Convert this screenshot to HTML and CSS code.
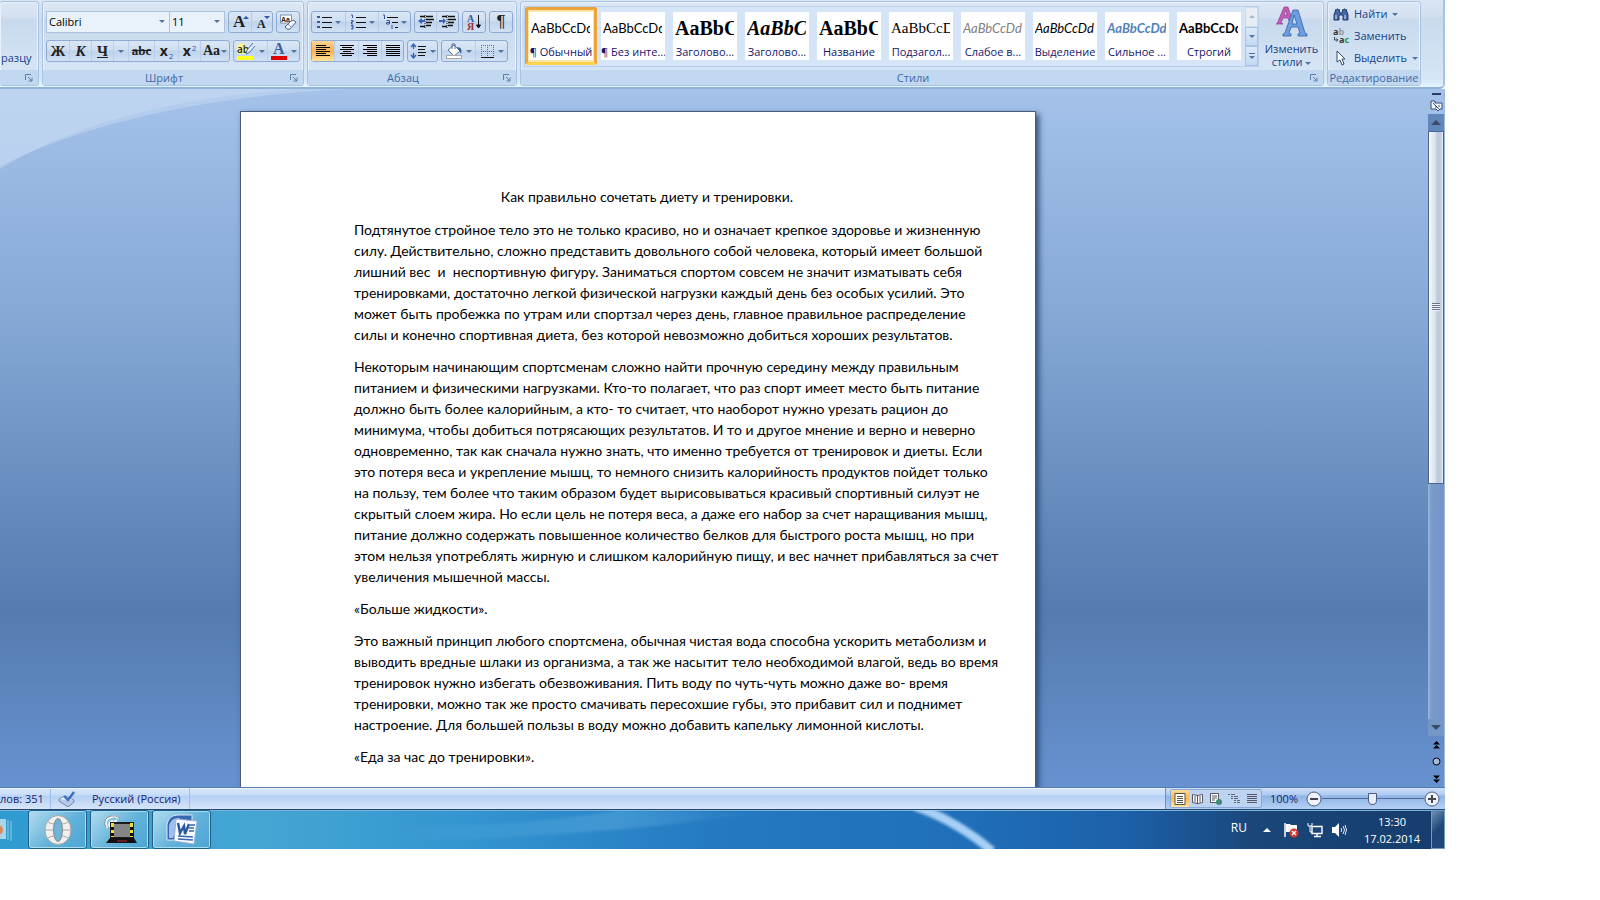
FILE: index.html
```
<!DOCTYPE html>
<html lang="ru">
<head>
<meta charset="utf-8">
<title>Документ</title>
<link rel="stylesheet" href="styles.css">
</head>
<body>
<div class="app">
  <header class="ribbon">
    <section class="group group-clip">
      <div class="group-body"><span class="clip-label">разцу</span></div>
      <div class="group-foot"><span></span><button class="launch" aria-label="Буфер обмена"><svg viewBox="0 0 8 8"><path d="M.5 6V.5H6M3 3l4 4M7 3.500V7H3.500"/></svg></button></div>
    </section>

    <section class="group group-font">
      <div class="group-body rows">
        <div class="row">
          <div class="combos">
            <label class="combo combo-name"><select aria-label="Шрифт"><option>Calibri</option></select></label>
            <label class="combo combo-size"><select aria-label="Размер шрифта"><option>11</option></select></label>
          </div>
          <div class="set">
            <button class="w22 serif big" aria-label="Увеличить размер">A<i class="up"></i></button>
            <button class="w21 serif small" aria-label="Уменьшить размер">A<i class="down"></i></button>
          </div>
          <div class="set">
            <button class="w22" aria-label="Очистить формат"><svg width="18" height="18" viewBox="0 0 18 18"><rect x="1.500" y="2" width="11" height="8" fill="#fff" stroke="#7f93b4"/><text x="2" y="9" font-size="7" font-weight="700" font-family="Liberation Sans" fill="#222">Aa</text><path d="M6 14l6-6q3-2 5 1l-5 6q-3 3-6-1z" fill="#f4f6fb" stroke="#4a5f86"/><path d="M9 11l4 4" stroke="#7f93b4"/></svg></button>
          </div>
        </div>
        <div class="row">
          <div class="set">
            <button class="w22 serif"><b>Ж</b></button>
            <button class="w22 serif"><b><em>К</em></b></button>
            <button class="w22 serif"><b><u>Ч</u></b></button>
            <button class="w16" aria-label="Вид подчеркивания"><i class="tri"></i></button>
            <button class="w25 serif strike"><s>abc</s></button>
            <button class="w24 sub"><b>x</b><sub>2</sub></button>
            <button class="w22 sub"><b>x</b><sup>2</sup></button>
            <button class="w29 serif aa">Aa<i class="tri"></i></button>
          </div>
          <div class="set">
            <button class="w33" aria-label="Цвет выделения"><svg width="20" height="18" viewBox="0 0 20 18"><path d="M1 3q8-4 10 3v6H1z" fill="#f8f48e"/><text x="1" y="11" font-size="10" font-weight="600" font-family="Open Sans" fill="#222">ab</text><path d="M17 1l-6 7-1 4 4-2 5-6" fill="#dce7f7" stroke="#52709f"/><rect x="1" y="14" width="16" height="4" fill="#ff2"/></svg><i class="tri"></i></button>
            <button class="w32" aria-label="Цвет текста"><svg width="18" height="18" viewBox="0 0 18 18"><text x="3" y="12" font-size="16" font-weight="700" font-family="Liberation Serif" fill="#3c5f9f">A</text><rect x="1" y="14" width="16" height="4" fill="#e00000"/></svg><i class="tri"></i></button>
          </div>
        </div>
      </div>
      <div class="group-foot"><span>Шрифт</span><button class="launch" aria-label="Параметры шрифта"><svg viewBox="0 0 8 8"><path d="M.5 6V.5H6M3 3l4 4M7 3.500V7H3.500"/></svg></button></div>
    </section>

    <section class="group group-par">
      <div class="group-body rows">
        <div class="row">
          <div class="set">
            <button class="w33" aria-label="Маркеры"><svg width="16" height="16" viewBox="0 0 16 16"><path d="M1 2h3v2H1zM1 7h3v2H1zM1 12h3v2H1z" fill="#34599c"/><path d="M6 3.500h10M6 8.500h10M6 13.500h10" stroke="#111"/></svg><i class="tri"></i></button>
            <button class="w33" aria-label="Нумерация"><svg width="16" height="16" viewBox="0 0 16 16"><path d="M1 1h1.500v3M1 6.500h2v1.500H1.500V10H3M1 11.500h2V15H1M1.500 13H3" fill="none" stroke="#34599c"/><path d="M6 3.500h10M6 8.500h10M6 13.500h10" stroke="#111"/></svg><i class="tri"></i></button>
            <button class="w32 tight" aria-label="Многоуровневый список"><svg width="18" height="16" viewBox="0 0 18 16"><path d="M1 1h1.500v4M4.500 6.500h3V10h-3V8.500h3M10 11v4" fill="none" stroke="#34599c"/><path d="M5 3.500h11M10 8.500h6M13 13.500h3" stroke="#111"/></svg><i class="tri"></i></button>
          </div>
          <div class="set">
            <button class="w21" aria-label="Уменьшить отступ"><svg width="17" height="16" viewBox="0 0 17 16"><path d="M3 2.500h5M3 12.500h5M9 2.500h7M9 5.500h8M9 8.500h6M9 11.500h5" stroke="#111" stroke-width="1.600"/><path d="M8 1v14" stroke="#111" stroke-dasharray="1 1"/><path d="M1 7l4-3v2h3v2H5v2z" fill="#2f62b8"/></svg></button>
            <button class="w22" aria-label="Увеличить отступ"><svg width="17" height="16" viewBox="0 0 17 16"><path d="M3 2.500h5M3 12.500h5M9 2.500h7M9 5.500h8M9 8.500h6M9 11.500h5" stroke="#111" stroke-width="1.600"/><path d="M8 1v14" stroke="#111" stroke-dasharray="1 1"/><path d="M7 7L4 4v2H0v2h4v2z" fill="#2f62b8"/></svg></button>
          </div>
          <div class="set"><button class="w22" aria-label="Сортировка"><svg width="16" height="18" viewBox="0 0 16 18"><text x="1" y="9" font-size="10" font-weight="700" font-family="Liberation Serif" fill="#34599c">А</text><text x="1" y="17" font-size="10" font-weight="700" font-family="Liberation Serif" fill="#a02c34">Я</text><path d="M12.500 2v12M10.500 12l2 3 2-3z" stroke="#111" fill="#111"/></svg></button></div>
          <div class="set"><button class="w22 pilcrow" aria-label="Все знаки">¶</button></div>
        </div>
        <div class="row">
          <div class="set">
            <button class="w22 on" aria-label="По левому краю"><svg width="16" height="14" viewBox="0 0 16 14"><path d="M1 1.500h10M1 3.500h14M1 5.500h10M1 7.500h14M1 9.500h10M1 11.500h14" stroke="#000"/></svg></button>
            <button class="w24" aria-label="По центру"><svg width="16" height="14" viewBox="0 0 16 14"><path d="M1 1.500h14M3 3.500h10M1 5.500h14M4 7.500h8M1 9.500h14M3 11.500h10" stroke="#000"/></svg></button>
            <button class="w23" aria-label="По правому краю"><svg width="16" height="14" viewBox="0 0 16 14"><path d="M1 1.500h14M5 3.500h10M1 5.500h14M5 7.500h10M1 9.500h14M5 11.500h10" stroke="#000"/></svg></button>
            <button class="w22" aria-label="По ширине"><svg width="16" height="14" viewBox="0 0 16 14"><path d="M1 1.500h14M1 3.500h14M1 5.500h14M1 7.500h14M1 9.500h14M1 11.500h14" stroke="#000"/></svg></button>
          </div>
          <div class="set"><button class="w29" aria-label="Междустрочный интервал"><svg width="17" height="18" viewBox="0 0 17 18"><path d="M3.500 2v5M1 5l2.500-3L6 5M3.500 11v5M1 13l2.500 3L6 13" fill="none" stroke="#2f62b8" stroke-width="1.400"/><path d="M8 4.500h8M8 7.500h7M8 10.500h8M8 13.500h7" stroke="#111"/></svg><i class="tri"></i></button></div>
          <div class="set">
            <button class="w33" aria-label="Заливка"><svg width="18" height="18" viewBox="0 0 18 18"><path d="M3 8l6-5 6 6-6 5z" fill="#fff" stroke="#5a6f92"/><path d="M7 7V2h3v5" fill="none" stroke="#5a6f92"/><path d="M12 5q6 0 4 7l-2-4z" fill="#2f5da5"/><rect x="1.500" y="13.500" width="15" height="3" fill="#fff" stroke="#aaa"/></svg><i class="tri"></i></button>
            <button class="w32" aria-label="Границы"><svg width="15" height="15" viewBox="0 0 15 15"><path d="M1 1.500h13M1 7.500h13M1.500 1v12M7.500 1v12M13.500 1v12" stroke="#5f6f88" stroke-dasharray="1 1"/><path d="M1 13.500h13" stroke="#111"/></svg><i class="tri"></i></button>
          </div>
        </div>
      </div>
      <div class="group-foot"><span>Абзац</span><button class="launch" aria-label="Параметры абзаца"><svg viewBox="0 0 8 8"><path d="M.5 6V.5H6M3 3l4 4M7 3.500V7H3.500"/></svg></button></div>
    </section>

    <section class="group group-styles">
      <div class="group-body styles-body">
        <div class="gallery">
          <button class="style sel"><span class="sample">AaBbCcDd</span><span class="name">¶ Обычный</span></button>
          <button class="style"><span class="sample">AaBbCcDd</span><span class="name">¶ Без инте...</span></button>
          <button class="style"><span class="sample cambria">AaBbCc</span><span class="name">Заголово...</span></button>
          <button class="style"><span class="sample cambria slant">AaBbCc</span><span class="name">Заголово...</span></button>
          <button class="style"><span class="sample cambria">AaBbCc</span><span class="name">Название</span></button>
          <button class="style"><span class="sample subtitle">AaBbCcD</span><span class="name">Подзагол...</span></button>
          <button class="style"><span class="sample it grey">AaBbCcDd</span><span class="name">Слабое в...</span></button>
          <button class="style"><span class="sample it">AaBbCcDd</span><span class="name">Выделение</span></button>
          <button class="style"><span class="sample it bold blue">AaBbCcDd</span><span class="name">Сильное ...</span></button>
          <button class="style"><span class="sample bold">AaBbCcDd</span><span class="name">Строгий</span></button>
          <div class="gallery-nav">
            <button class="off" aria-label="Вверх"><i class="tri flip"></i></button>
            <button aria-label="Вниз"><i class="tri"></i></button>
            <button class="more" aria-label="Дополнительно"><i class="tri"></i></button>
          </div>
        </div>
        <button class="change"><svg width="32" height="32" viewBox="0 0 32 32"><path d="M1 18L8 1h4l4 12-3 2-1-3H7l-2 5 2 1H0zM8 9h3l-1-5z" fill="#c45bb4" stroke="#8d3f96" stroke-width=".7"/><path d="M7 28l2-1L17 4h5l7 23 2 1v2h-9v-2l2-1-2-6h-7l-2 6 2 1v2H7zM16 18h5l-3-9z" fill="#6c9fe0" stroke="#3560a8" stroke-width=".8"/></svg><span>Изменить</span><span>стили <i class="tri"></i></span></button>
      </div>
      <div class="group-foot"><span>Стили</span><button class="launch" aria-label="Параметры стилей"><svg viewBox="0 0 8 8"><path d="M.5 6V.5H6M3 3l4 4M7 3.500V7H3.500"/></svg></button></div>
    </section>

    <section class="group group-edit">
      <div class="group-body edit">
        <button><svg width="16" height="16" viewBox="0 0 16 16"><path d="M1 14V9l2-6h3l1 4h2l1-4h3l2 6v5h-5V9H6v5z" fill="#4668a6" stroke="#22396b"/><path d="M3 9v4M12 9v4M3.500 3V1h2v2M10.500 3V1h2v2" stroke="#d8e4f8" fill="none"/></svg><span>Найти</span><i class="tri"></i></button>
        <button><svg width="16" height="16" viewBox="0 0 16 16"><text x="0" y="7" font-size="9" font-weight="700" font-family="Noto Sans" fill="#333">a<tspan fill="#999">b</tspan></text><text x="6" y="15" font-size="9" font-weight="700" font-family="Noto Sans" fill="#333">a<tspan fill="#1c9a2e">c</tspan></text><path d="M1.500 9v3h3M3.500 10.500L5 12l-1.500 1.500" fill="none" stroke="#345"/></svg><span>Заменить</span></button>
        <button><svg width="16" height="16" viewBox="0 0 16 16"><path d="M4 1v11l3-2 2 5 2-1-2-5h3z" fill="#fff" stroke="#334a73"/></svg><span>Выделить</span><i class="tri"></i></button>
      </div>
      <div class="group-foot"><span>Редактирование</span></div>
    </section>
  </header>

  <div class="work">
    <svg class="swoosh" width="360" height="90" viewBox="0 0 360 90"><path d="M0 0H345Q130 12 0 77z" fill="#cfe0f6" opacity=".4"/><path d="M0 0H300Q110 12 0 80z" fill="#cfe0f6" opacity=".35"/></svg>
    <main class="canvas">
      <article class="page">
        <h1>Как правильно сочетать диету и тренировки.</h1>
        <p>Подтянутое стройное тело это не только красиво, но и означает крепкое здоровье и жизненную<br>силу. Действительно, сложно представить довольного собой человека, который имеет большой<br>лишний вес&nbsp; и&nbsp; неспортивную фигуру. Заниматься спортом совсем не значит изматывать себя<br>тренировками, достаточно легкой физической нагрузки каждый день без особых усилий. Это<br>может быть пробежка по утрам или спортзал через день, главное правильное распределение<br>силы и конечно спортивная диета, без которой невозможно добиться хороших результатов.</p>
        <p>Некоторым начинающим спортсменам сложно найти прочную середину между правильным<br>питанием и физическими нагрузками. Кто-то полагает, что раз спорт имеет место быть питание<br>должно быть более калорийным, а кто- то считает, что наоборот нужно урезать рацион до<br>минимума, чтобы добиться потрясающих результатов. И то и другое мнение и верно и неверно<br>одновременно, так как сначала нужно знать, что именно требуется от тренировок и диеты. Если<br>это потеря веса и укрепление мышц, то немного снизить калорийность продуктов пойдет только<br>на пользу, тем более что таким образом будет вырисовываться красивый спортивный силуэт не<br>скрытый слоем жира. Но если цель не потеря веса, а даже его набор за счет наращивания мышц,<br>питание должно содержать повышенное количество белков для быстрого роста мышц, но при<br>этом нельзя употреблять жирную и слишком калорийную пищу, и вес начнет прибавляться за счет<br>увеличения мышечной массы.</p>
        <p>«Больше жидкости».</p>
        <p>Это важный принцип любого спортсмена, обычная чистая вода способна ускорить метаболизм и<br>выводить вредные шлаки из организма, а так же насытит тело необходимой влагой, ведь во время<br>тренировок нужно избегать обезвоживания. Пить воду по чуть-чуть можно даже во- время<br>тренировки, можно так же просто смачивать пересохшие губы, это прибавит сил и поднимет<br>настроение. Для большей пользы в воду можно добавить капельку лимонной кислоты.</p>
        <p>«Еда за час до тренировки».</p>
      </article>
    </main>
    <aside class="scroll">
      <div class="split"></div>
      <button class="rule" aria-label="Линейка"><svg width="13" height="13" viewBox="0 0 13 13"><path d="M1 2h4v2h7v6h-2l-2 2-2-2H1z" fill="#eef3fb" stroke="#3b4d73"/><path d="M3 4l6 6M5 8h2M9 6v2" stroke="#3b4d73"/></svg></button>
      <button class="arrow arrow-up" aria-label="Прокрутить вверх"><i class="tri flip"></i></button>
      <div class="track"><div class="thumb"><span></span></div></div>
      <button class="arrow" aria-label="Прокрутить вниз"><i class="tri"></i></button>
      <button class="jump" aria-label="Предыдущая страница"><svg width="7" height="8" viewBox="0 0 7 8"><path d="M0 3.500L3.500 0 7 3.500zM0 7.500L3.500 4 7 7.500z"/></svg></button>
      <button class="jump" aria-label="Выбор объекта"><svg width="9" height="9" viewBox="0 0 9 9"><circle cx="4.500" cy="4.500" r="3.500" fill="#a9bad6" stroke="#000"/></svg></button>
      <button class="jump" aria-label="Следующая страница"><svg width="7" height="8" viewBox="0 0 7 8"><path d="M0 .5h7L3.500 4zM0 4.500h7L3.500 8z"/></svg></button>
    </aside>
  </div>

  <footer class="status">
    <span class="words">лов: 351</span>
    <button class="proof" aria-label="Правописание"><svg width="18" height="16" viewBox="0 0 18 16"><path d="M1 8l6-3 9 4-6 5z" fill="#fff" stroke="#6f86b5"/><path d="M1 8v2l9 6 6-5V9" fill="#b6c8e6" stroke="#6f86b5"/><path d="M6 5l4 4 6-8" fill="none" stroke="#3f6ebd" stroke-width="2.400"/></svg></button>
    <button class="lang">Русский (Россия)</button>
    <div class="status-right">
      <div class="views">
        <button class="on" aria-label="Разметка страницы"><svg width="12" height="12" viewBox="0 0 12 12"><path d="M1 .5h10v11H1z" fill="#fff" stroke="#554"/><path d="M3 3.500h6M3 5.500h6M3 7.500h6M3 9.500h6" stroke="#554"/></svg></button>
        <button aria-label="Режим чтения"><svg width="12" height="12" viewBox="0 0 12 12"><path d="M.5 1.500l5 1 5-1v8l-5 1-5-1zM5.500 2v9M2 4h2M2 6h2M2 8h2M7 4h2M7 6h2M7 8h2" fill="#fff" stroke="#556"/></svg></button>
        <button aria-label="Веб-документ"><svg width="12" height="12" viewBox="0 0 12 12"><path d="M.5.5h8v9h-8zM2 3h5M2 5h5M2 7h3" fill="#fff" stroke="#556"/><circle cx="9" cy="9" r="3" fill="#3c8a7a"/></svg></button>
        <button aria-label="Структура"><svg width="12" height="12" viewBox="0 0 12 12"><path d="M0 1.500h7M3 3.500h7M3 5.500h7M6 7.500h6M6 9.500h6" stroke="#667" stroke-dasharray="2 1 7 0"/></svg></button>
        <button aria-label="Черновик"><svg width="12" height="12" viewBox="0 0 12 12"><path d="M1 1.500h10M1 3.500h10M1 5.500h10M1 7.500h10M1 9.500h10" stroke="#556"/></svg></button>
      </div>
      <span class="percent">100%</span>
      <button class="zoom" aria-label="Уменьшить"><svg width="16" height="16" viewBox="0 0 16 16"><circle cx="8" cy="8" r="7" fill="#eef3fb" stroke="#4d5f80"/><path d="M4 8h8" stroke="#445" stroke-width="2"/></svg></button>
      <input class="slider" type="range" min="0" max="100" value="49" aria-label="Масштаб">
      <button class="zoom" aria-label="Увеличить"><svg width="16" height="16" viewBox="0 0 16 16"><circle cx="8" cy="8" r="7" fill="#eef3fb" stroke="#4d5f80"/><path d="M4 8h8M8 4v8" stroke="#445" stroke-width="2"/></svg></button>
    </div>
  </footer>

  <nav class="taskbar">
    <svg class="aero" viewBox="0 0 1445 40" preserveAspectRatio="none"><defs><filter id="soft"><feGaussianBlur stdDeviation="1.500"/></filter><linearGradient id="fade"><stop offset="0" stop-color="#6bb8e8" stop-opacity="0"/><stop offset=".6" stop-color="#6bb8e8" stop-opacity=".35"/><stop offset="1" stop-color="#6bb8e8" stop-opacity="0"/></linearGradient></defs><path d="M400 32Q620 26 760 2L620 0Q540 14 400 20z" fill="url(#fade)" filter="url(#soft)"/><path d="M915-4Q958 12 992 42" fill="none" stroke="#a8d0f6" stroke-width="9" filter="url(#soft)"/></svg>
    <button class="pin" aria-label="Проигрыватель"><svg width="12" height="26" viewBox="0 0 12 26"><path d="M0 2h6v20H0z" fill="#a9d4ea"/><path d="M8 3v20M11 4v20" stroke="#8fcbe8"/><circle cx="-2" cy="13" r="5" fill="#d98a5c"/></svg></button>
    <button class="task" aria-label="Opera"><svg width="30" height="32" viewBox="0 0 30 32"><ellipse cx="15" cy="16" rx="13" ry="14.500" fill="#f1f0ee" stroke="#a9a6a2"/><ellipse cx="15" cy="16" rx="4.500" ry="11.500" fill="#6fb4d6" stroke="#8d8a86"/><path d="M2 16h8M20 16h8M5 8q3 2 6 2M25 8q-3 2-6 2M5 24q3-2 6-2M25 24q-3-2-6-2" fill="none" stroke="#aaa"/></svg></button>
    <button class="task" aria-label="Ноутбук"><svg width="34" height="30" viewBox="0 0 34 30"><path d="M4 13Q0 4 8 2q4-2 8 1M7 12Q5 7 10 6M10 12V8l4-3" fill="none" stroke="#fff" stroke-width="2"/><path d="M3 13Q-1 3 8 1q5-1 9 2" fill="none" stroke="#666" stroke-width=".7"/><path d="M7 7h24v16H7z" fill="#1c1c1c"/><path d="M8 8h3v14H8zM27 8h3v14h-3z" fill="#f2e02c"/><path d="M8 12h3v3H8zM8 18h3v3H8zM27 12h3v3h-3zM27 18h3v3h-3z" fill="#111"/><path d="M11 9h16v13H11z" fill="#858585"/><path d="M7 23h24l3 5H3z" fill="#111"/><path d="M14 26h10" stroke="#b33"/></svg></button>
    <button class="task" aria-label="Word"><svg width="32" height="32" viewBox="0 0 32 32"><path d="M1 26V10Q3 1 12 1h14v25z" fill="#3767b0" stroke="#dbe7f7"/><path d="M3 24V12Q5 3 14 4L7 24z" fill="#9fc0ea"/><path d="M10 5l21 2-3 23-20-3z" fill="#f7faff" stroke="#9fb1cf"/><path d="M12 9l2 10 4-7 1 8 4-10" fill="none" stroke="#2a56a0" stroke-width="2.400"/><path d="M24 11h5M23 14h5M23 17h5M12 22l15 1M12 25l15 1" stroke="#3767b0" stroke-width="1.500"/></svg></button>
    <div class="tray">
      <button class="ru">RU</button>
      <div class="tray-icons">
        <button class="tri-up" aria-label="Скрытые значки"><i></i></button>
        <button aria-label="Центр поддержки"><svg width="16" height="16" viewBox="0 0 16 16"><path d="M2 1v14" stroke="#fff" stroke-width="1.500"/><path d="M3 2h4l1 1h6v7H3z" fill="#fff"/><circle cx="11" cy="11" r="4.500" fill="#d8332c"/><path d="M9 9l4 4M13 9l-4 4" stroke="#fff" stroke-width="1.400"/></svg></button>
        <button aria-label="Сеть"><svg width="16" height="16" viewBox="0 0 16 16"><path d="M5 4.500h10v7H5zM7 14.500h7M10 12v2" fill="#1b4478" stroke="#fff" stroke-width="1.400"/><path d="M1 1v3h4V1M3 4v6h2" fill="none" stroke="#fff"/></svg></button>
        <button aria-label="Громкость"><svg width="16" height="16" viewBox="0 0 16 16"><path d="M1 5h3l4-4v14l-4-4H1z" fill="#fff"/><path d="M10 6q1.500 2 0 4M12 4q3 4 0 8M14 3q3 5 0 10" fill="none" stroke="#dfe9f5"/></svg></button>
      </div>
      <button class="clock"><time>13:30</time><time>17.02.2014</time></button>
      <button class="desk" aria-label="Показать рабочий стол"></button>
    </div>
  </nav>
</div>
</body>
</html>
```
FILE: styles.css
```
* { box-sizing: border-box; }

body {
  margin: 0;
  height: 100vh;
  padding: 0 155px 51px 0;
  background: #fff;
  font: 11px/16px "Open Sans", "Noto Sans", sans-serif;
  color: #15428b;
  overflow: hidden;
}

button {
  margin: 0;
  padding: 0;
  border: 0;
  background: none;
  font: inherit;
  color: inherit;
}

svg { display: block; flex: none; }

.app { display: flex; flex-direction: column; height: 100%; overflow: hidden; }

/* ribbon */
.ribbon {
  flex: none;
  display: flex;
  gap: 3px;
  height: 89px;
  padding: 1px 22px 1px 0;
  background: linear-gradient(#dbe6f4 0, #cfdded 17px, #c9daed 18px, #d6e6f6 80px, #e3f4ff 86px);
  border-bottom: 2px solid #8fb2d6;
  border-right: 2px solid #a6c4e6;
  border-radius: 0 0 5px 0;
  overflow: hidden;
}

.group {
  display: flex;
  flex-direction: column;
  flex: none;
  border: 1px solid #a9c3e0;
  border-radius: 3px;
  background: linear-gradient(#dde8f5 0, #d3e0f0 16px, #c8d9ed 17px, #d9e8f8 100%);
  box-shadow: inset 0 0 0 1px #e8f1fb;
  overflow: hidden;
}

.group-clip { width: 39px; border-left: 0; }
.group-font { width: 262px; }
.group-par { width: 210px; }
.group-styles { flex: 1 1 0; min-width: 0; }
.group-edit { width: 94px; }

.group-body { flex: 1; min-height: 0; }

.group-foot {
  flex: none;
  display: flex;
  height: 15px;
  background: #c1d8f0;
  color: #3e6aaa;
  line-height: 16px;
}

.group-foot span { flex: 1; text-align: center; white-space: nowrap; }

.launch { width: 18px; display: grid; place-items: center; }
.launch svg { width: 8px; height: 8px; fill: none; stroke: #5d7ea9; }

.clip-label { display: block; padding: 48px 0 0 1px; }

.rows { padding: 9px 3px 0; display: flex; flex-direction: column; gap: 7px; }
.row { display: flex; gap: 3px; }

.set {
  display: flex;
  height: 22px;
  border: 1px solid #8fabd4;
  border-radius: 3px;
  background: linear-gradient(#d9e6f5 0, #cfdff1 9px, #bfd3ec 10px, #d0e1f4 100%);
}

.set button {
  display: flex;
  align-items: center;
  justify-content: center;
  gap: 3px;
  color: #222;
  position: relative;
}

.set button + button { border-left: 1px solid #b9cde8; }
.set .tight { gap: 1px; }
.w16 { width: 15px; }
.w21 { width: 21px; }
.w22 { width: 22px; }
.w23 { width: 23px; }
.w24 { width: 24px; }
.w25 { width: 26px; }
.w29 { width: 29px; }
.w32 { width: 32px; }
.w33 { width: 33px; }

.set .on { background: linear-gradient(#fbd59a, #fbb04f 50%, #fde39a); }

.serif { font-family: "Liberation Serif", serif; font-size: 15px; font-weight: 700; }
.set .big { font-size: 17px; justify-content: flex-start; padding-left: 4px; }
.set .small { font-size: 12px; padding-top: 3px; justify-content: flex-start; padding-left: 5px; }
.set .strike { font-size: 13px; font-weight: 700; }
.set .aa { font-size: 14px; gap: 1px; }
.set .sub { font-size: 14px; gap: 1px; }
.sub sub, .sub sup { font-size: 8px; line-height: 8px; color: #2f56a8; align-self: flex-end; padding-bottom: 1px; }
.sub sup { align-self: flex-start; padding-top: 3px; }
.pilcrow { font: 400 17px/18px "Liberation Sans", sans-serif; }

.tri { flex: none; display: inline-block; border: 3px solid transparent; border-top-color: #53749f; border-bottom: 0; vertical-align: middle; }
.flip { transform: rotate(180deg); }

.up, .down { position: absolute; top: 4px; right: 2px; border: 3px solid transparent; }
.up { border-bottom-color: #2f56a8; border-top: 0; }
.down { border-top-color: #2f56a8; border-bottom: 0; }

.combos { display: flex; }
.combo { position: relative; height: 22px; border: 1px solid #abc1de; background: #e9f2fb; }
.combo-name { width: 124px; }
.combo-size { width: 55px; border-left: 0; }
.combo::after { content: ""; position: absolute; right: 4px; top: 8px; border: 3px solid transparent; border-top-color: #53749f; border-bottom: 0; pointer-events: none; }
.combo select { width: 100%; height: 100%; padding: 0 2px; border: 0; background: none; appearance: none; font: inherit; color: #000; }

/* styles gallery */
.styles-body { display: flex; padding: 4px 3px 3px 3px; gap: 4px; }
.gallery { flex: 1; min-width: 0; display: flex; border: 1px solid #b9d0ec; background: #d5e5f7; overflow: hidden; }

.style {
  flex: 0 0 72px;
  min-width: 0;
  height: 58px;
  padding: 5px 4px;
}
.style.sel { padding: 2px 1px; border: 3px solid #eca43b; border-bottom-color: #fbd24c; border-radius: 3px; background: #fbe6a6; }
.sample, .name { display: block; background: #fff; overflow: hidden; white-space: nowrap; }
.sample { height: 32px; border: solid #fff; border-width: 0 3px 0 2px; font: 13px/33px Lato, sans-serif; color: #000; text-align: left; }
.name { height: 16px; color: #15156b; line-height: 15px; text-align: center; }
.cambria { font: 700 20px/32px "Liberation Serif", serif; }
.slant { font-style: italic; }
.subtitle { font: 15px/32px "Liberation Serif", serif; }
.it { font-style: italic; }
.bold { font-weight: 700; }
.grey { color: #808080; }
.blue { color: #4f81bd; }

.gallery-nav { margin-left: auto; width: 14px; display: flex; flex-direction: column; }
.gallery-nav button { flex: 1; display: grid; place-items: center; border: 1px solid #a9c3e6; background: linear-gradient(#dce9f8, #c3d8f2); }
.gallery-nav .off { background: #e8edf4; border-color: #d0dae8; }
.off .tri { opacity: .45; }
.gallery-nav .more { align-content: center; gap: 2px; }
.more::before { content: ""; width: 6px; height: 1px; background: #53749f; }

.change { width: 57px; display: flex; flex-direction: column; align-items: center; line-height: 13px; }
.change svg { margin-bottom: 4px; }

.edit { display: flex; flex-direction: column; padding: 1px 5px; }
.edit button { display: flex; align-items: center; gap: 5px; height: 22px; white-space: nowrap; }

/* document */
.work {
  flex: 1;
  min-height: 0;
  position: relative;
  display: flex;
  background: linear-gradient(#a4c2ea 0, #84a7d4 34%, #5f86b9 65%, #557cb0 75%, #6792d0 100%);
}
.swoosh { position: absolute; left: 0; top: 0; }
.canvas { position: relative; flex: 1; min-width: 0; padding: 22px 0 0 240px; overflow: hidden; }

.page {
  width: 796px;
  height: 1123px;
  padding: 74px 57px 0 113px;
  border: 1px solid #4a5a72;
  background: #fff;
  box-shadow: 3px 3px 6px #2f4c7a;
  color: #000;
  font: 14px/21px Lato, Carlito, sans-serif;
  white-space: nowrap;
}
.page h1 { margin: 0 38px 12px 0; font: inherit; text-align: center; }
.page p { margin: 0 0 11px; }

.scroll { position: relative; flex: none; width: 17px; display: flex; flex-direction: column; align-items: center; border-right: 1px solid #9db9de; }
.split { width: 9px; height: 2px; margin: 4px 0 2px; background: #2c3d63; }
.rule { height: 17px; }
.arrow { width: 16px; height: 17px; display: grid; place-items: center; background: #7398c8; }
.arrow .tri { border-width: 5px; border-bottom: 0; border-top-color: #3b4a66; }
.arrow-up { background: #6287bb; }
.track { flex: 1; width: 16px; background: linear-gradient(90deg, #9bb9e2, #7b9bcb 3px, #7394c6); }
.thumb {
  height: 60%;
  display: grid;
  place-items: center;
  border: 1px solid #4c6490;
  background: linear-gradient(90deg, #fff, #e4ebf1 3px, #dfe6ee 6px, #bccadd 8px, #c3cede 12px, #eef2f7);
}
.thumb span { width: 8px; height: 8px; background: repeating-linear-gradient(#67758c 0 1px, #eef 1px 2px); }
.jump { height: 17px; width: 16px; display: grid; place-items: center; }

/* status bar */
.status {
  flex: none;
  display: flex;
  align-items: center;
  height: 23px;
  border-top: 1px solid #567db1;
  border-bottom: 1px solid #24496f;
  background: linear-gradient(#fff 0, #d7e6f9 1px, #c7dcf8 7px, #b3d0f5 8px, #d7e5f7 100%);
  color: #15256b;
  line-height: 20px;
  white-space: nowrap;
}
.words { width: 51px; border-right: 1px solid #9fbfe8; }
.proof { padding: 0 16px 0 7px; }
.lang { height: 21px; padding-right: 8px; border-right: 1px solid #9fbfe8; }
.status-right {
  margin-left: auto;
  display: flex;
  align-items: center;
  height: 21px;
  padding: 0 5px 0 4px;
  border-left: 1px solid #6c8fc2;
  background: linear-gradient(#cfe0f8 0, #adc9f0 7px, #8fb4e6 8px, #b5d0f4 100%);
}
.views { display: flex; height: 19px; border: 1px solid #8aa9d6; border-radius: 2px; background: #bdd3f2; }
.views button { width: 18px; display: grid; place-items: center; }
.views .on { background: linear-gradient(#fbdc9a, #f9b850 50%, #fde7a4); }
.percent { width: 44px; text-align: center; }
.zoom { width: 16px; height: 16px; }
.slider { width: 102px; height: 16px; margin: 0; appearance: none; background: linear-gradient(#4f6c9a, #4f6c9a) center / 100% 1px no-repeat; }
.slider::-webkit-slider-thumb { appearance: none; width: 9px; height: 12px; border: 1px solid #4d5f80; border-radius: 1px 1px 5px 5px; background: #e6edf8; }

/* taskbar */
.taskbar {
  flex: none;
  position: relative;
  display: flex;
  gap: 3px;
  height: 39px;
  background: linear-gradient(90deg, #2f9bd0 0, #45a6d3 18%, #3394d0 33%, #2479c0 50%, #2071ba 65%, #1c60a9 78%, #1a4679 87%, #153c6c 100%);
  box-shadow: inset 0 1px 0 #7ab2dc;
  color: #fff;
}
.aero { position: absolute; inset: 0; width: 100%; height: 100%; }
.pin { position: relative; width: 25px; }
.task {
  position: relative;
  width: 59px;
  display: grid;
  place-items: center;
  border: 1px solid #215f86;
  border-radius: 3px;
  background: linear-gradient(135deg, #b4dcf0, #62b2da 55%, #4ba6d4);
  box-shadow: inset 0 0 0 1px #a5dcf2;
}
.tray { position: relative; margin-left: auto; display: flex; align-items: center; gap: 2px; font-size: 12px; }
.ru { padding: 0 10px 4px 0; }
.tray-icons { display: flex; align-items: center; gap: 8px; padding-right: 6px; }
.tri-up { width: 16px; display: grid; place-items: center; }
.tri-up i { border: 4px solid transparent; border-bottom-color: #fff; border-top: 0; }
.clock { width: 74px; display: flex; flex-direction: column; align-items: center; font-size: 11px; line-height: 17px; }
.desk { align-self: stretch; width: 14px; border: 1px solid #6f9cc4; background: linear-gradient(135deg, #6b8fb2, #1f4878 50%); }
```
